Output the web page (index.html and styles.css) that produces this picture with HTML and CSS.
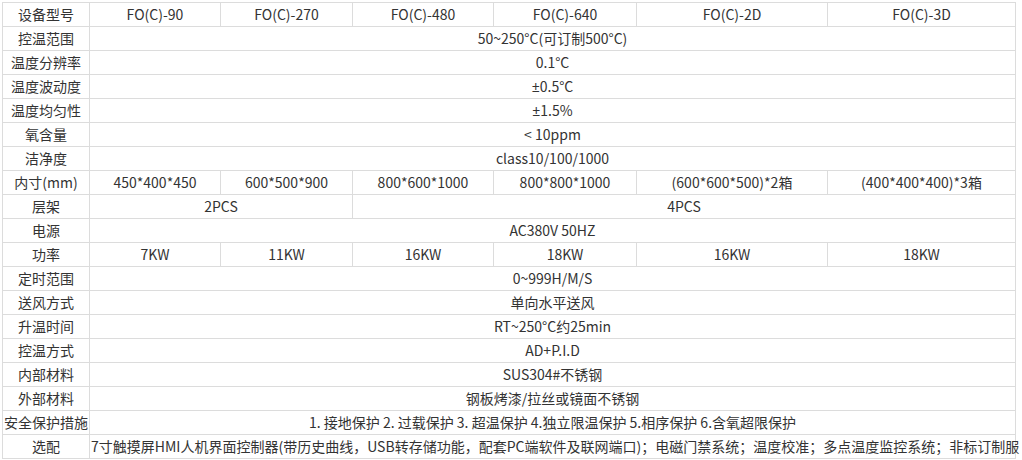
FILE: index.html
```html
<!DOCTYPE html>
<html lang="zh-CN">
<head>
<meta charset="utf-8">
<title>规格参数</title>
<link rel="stylesheet" href="styles.css">
</head>
<body>
<div class="wrap">
<table class="spec">
<colgroup>
<col class="c0"><col class="c1"><col class="c2"><col class="c3"><col class="c4"><col class="c5"><col class="c6">
</colgroup>
<tbody>
<tr><td>设备型号</td><td>FO(C)-90</td><td>FO(C)-270</td><td>FO(C)-480</td><td>FO(C)-640</td><td>FO(C)-2D</td><td>FO(C)-3D</td></tr>
<tr><td>控温范围</td><td colspan="6">50~250°C(可订制500°C)</td></tr>
<tr><td>温度分辨率</td><td colspan="6">0.1°C</td></tr>
<tr><td>温度波动度</td><td colspan="6"><span class="sym">±</span>0.5°C</td></tr>
<tr><td>温度均匀性</td><td colspan="6"><span class="sym">±</span>1.5%</td></tr>
<tr><td>氧含量</td><td colspan="6">&lt; 10ppm</td></tr>
<tr><td>洁净度</td><td colspan="6">class10/100/1000</td></tr>
<tr><td>内寸(mm)</td><td>450*400*450</td><td>600*500*900</td><td>800*600*1000</td><td>800*800*1000</td><td>(600*600*500)*2箱</td><td>(400*400*400)*3箱</td></tr>
<tr><td>层架</td><td colspan="2">2PCS</td><td colspan="4">4PCS</td></tr>
<tr><td>电源</td><td colspan="6">AC380V 50HZ</td></tr>
<tr><td>功率</td><td>7KW</td><td>11KW</td><td>16KW</td><td>18KW</td><td>16KW</td><td>18KW</td></tr>
<tr><td>定时范围</td><td colspan="6">0~999H/M/S</td></tr>
<tr><td>送风方式</td><td colspan="6">单向水平送风</td></tr>
<tr><td>升温时间</td><td colspan="6">RT~250°C约25min</td></tr>
<tr><td>控温方式</td><td colspan="6">AD+P.I.D</td></tr>
<tr><td>内部材料</td><td colspan="6">SUS304#不锈钢</td></tr>
<tr><td>外部材料</td><td colspan="6">钢板烤漆/拉丝或镜面不锈钢</td></tr>
<tr><td>安全保护措施</td><td colspan="6">1. 接地保护 2. 过载保护 3. 超温保护 4.独立限温保护 5.相序保护 6.含氧超限保护</td></tr>
<tr><td>选配</td><td colspan="6" class="left">7寸触摸屏HMI人机界面控制器(带历史曲线，USB转存储功能，配套PC端软件及联网端口)；电磁门禁系统；温度校准；多点温度监控系统；非标订制服</td></tr>
</tbody>
</table>
</div>
</body>
</html>
```

FILE: styles.css
```css
html, body {
  margin: 0;
  padding: 0;
  background: #fff;
}
.wrap {
  padding: 2px;
}
.spec {
  border-collapse: collapse;
  table-layout: fixed;
  width: 1014px;
  font-family: "Noto Sans CJK SC", "Microsoft YaHei", sans-serif;
  font-size: 14px;
  color: #333;
}
.spec td {
  border: 1px solid #dcdcdc;
  height: 23px;
  padding: 0;
  line-height: 23px;
  text-align: center;
  white-space: nowrap;
}
.c0 { width: 87px; }
.c1 { width: 131px; }
.c2 { width: 132px; }
.c3 { width: 141px; }
.c4 { width: 143px; }
.c5 { width: 191px; }
.c6 { width: 188px; }
.spec td.left {
  text-align: left;
  padding-left: 1px;
}
.sym {
  font-family: "Noto Sans", "DejaVu Sans", sans-serif;
}
```
